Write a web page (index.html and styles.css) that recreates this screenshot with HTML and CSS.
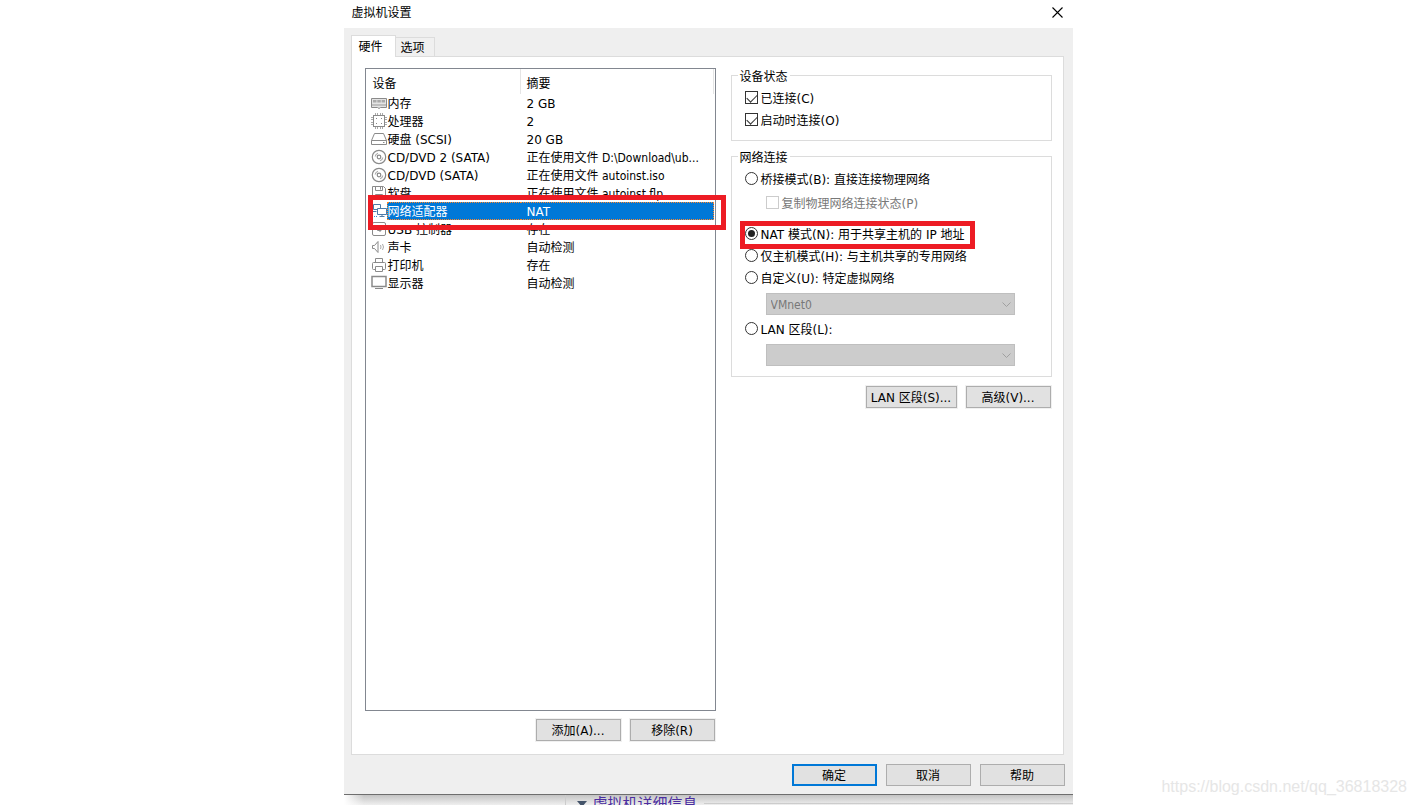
FILE: index.html
```html
<!DOCTYPE html>
<html lang="zh-CN">
<head>
    <meta charset="UTF-8">
    <meta name="viewport" content="width=device-width, initial-scale=1.0">
    <title>虚拟机设置</title>
    <link rel="stylesheet" href="styles.css">
</head>
<body>
    <div class="dialog">
        <header class="title-bar">
            <h1 class="title">虚拟机设置</h1>
            <button class="close" type="button" aria-label="关闭">
                <svg viewBox="0 0 11 11" fill="none" stroke="#000" stroke-width="1.1"><path d="M.5.5l10 10M10.5.5l-10 10"/></svg>
            </button>
        </header>

        <div class="tabs" role="tablist">
            <button class="tab active" type="button" role="tab" aria-selected="true">硬件</button>
            <button class="tab" type="button" role="tab" aria-selected="false">选项</button>
        </div>

        <main class="panel">
            <!-- 设备列表 -->
            <section class="devices">
                <div class="list-box">
                    <table class="list">
                        <colgroup>
                            <col class="col-icon">
                            <col class="col-name">
                            <col>
                        </colgroup>
                        <thead>
                            <tr>
                                <th colspan="2">设备</th>
                                <th>摘要</th>
                            </tr>
                        </thead>
                        <tbody>
                            <tr>
                                <td><svg class="icon" viewBox="0 0 16 16"><path d="M.5 3.500h15v9h-6l-1.500 1-1.500-1h-6z" fill="#e4e4e4" stroke="#8a8a8a"/><path d="M2 5h3.500v2.500H2zM6.300 5h3.500v2.500H6.300zM10.600 5H14v2.500h-3.400z" fill="#aaa"/><path d="M1 10h14" stroke="#999"/></svg></td>
                                <td>内存</td>
                                <td>2 GB</td>
                            </tr>
                            <tr>
                                <td><svg class="icon" viewBox="0 0 16 16" fill="none" stroke="#8a8a8a"><path d="M4.500 0v2M6.500 0v2M9.500 0v2M11.500 0v2M4.500 14v2M6.500 14v2M9.500 14v2M11.500 14v2M0 4.500h2M0 6.500h2M0 9.500h2M0 11.500h2M14 4.500h2M14 6.500h2M14 9.500h2M14 11.500h2" stroke="#aaa"/><rect x="2.500" y="2.500" width="11" height="11" fill="#fff"/><path d="M5 5.500h1M10 5.500h1M5 10.500h1M10 10.500h1"/></svg></td>
                                <td>处理器</td>
                                <td>2</td>
                            </tr>
                            <tr>
                                <td><svg class="icon" viewBox="0 0 16 16" fill="none" stroke="#8a8a8a"><path d="M3.500 2.500h9l3 7v4H.5v-4zM.5 9.500h15M12 11.500h1.500"/></svg></td>
                                <td>硬盘 (SCSI)</td>
                                <td>20 GB</td>
                            </tr>
                            <tr>
                                <td><svg class="icon" viewBox="0 0 16 16" fill="none" stroke="#8a8a8a" stroke-width="1.200"><circle cx="8" cy="8" r="6.700"/><circle cx="8" cy="8" r="1.800"/><path d="M4.200 7.500a4 4 0 0 1 2.800-3.300M11.800 8.500A4 4 0 0 1 9 11.800" stroke="#aaa"/></svg></td>
                                <td>CD/DVD 2 (SATA)</td>
                                <td class="file">正在使用文件 D:\Download\ub...</td>
                            </tr>
                            <tr>
                                <td><svg class="icon" viewBox="0 0 16 16" fill="none" stroke="#8a8a8a" stroke-width="1.200"><circle cx="8" cy="8" r="6.700"/><circle cx="8" cy="8" r="1.800"/><path d="M4.200 7.500a4 4 0 0 1 2.800-3.300M11.800 8.500A4 4 0 0 1 9 11.800" stroke="#aaa"/></svg></td>
                                <td>CD/DVD (SATA)</td>
                                <td class="file">正在使用文件 autoinst.iso</td>
                            </tr>
                            <tr>
                                <td><svg class="icon" viewBox="0 0 16 16" fill="none" stroke="#8a8a8a"><path d="M1.500 1.500h11l2 2v11h-13zM4.500 1.500v4h7v-4M9.500 2v2.500M4.500 14.500v-5h7v5"/></svg></td>
                                <td>软盘</td>
                                <td class="file">正在使用文件 autoinst.flp</td>
                            </tr>
                            <tr class="selected" aria-selected="true">
                                <td><svg class="icon" viewBox="0 0 16 16" fill="none" stroke="#4d7ba8"><path d="M2.500 1.500h7v5h-7zM1.500 8.500h4"/><path d="M6.500 5.500h9v6h-9z" fill="#fff"/><path d="M11 11.500v2M8.500 13.500h5"/><path d="M1 13.500h6" stroke="#2f8bd8" stroke-dasharray="1 1"/></svg></td>
                                <td>网络适配器</td>
                                <td>NAT</td>
                            </tr>
                            <tr>
                                <td><svg class="icon" viewBox="0 0 16 16" fill="none" stroke="#8a8a8a"><rect x="1.500" y="1.500" width="13" height="13" rx="1.500"/><path d="M6.500 4v5.500H10M8.500 8l1.500 1.500L8.500 11"/></svg></td>
                                <td>USB 控制器</td>
                                <td>存在</td>
                            </tr>
                            <tr>
                                <td><svg class="icon" viewBox="0 0 16 16" fill="none" stroke="#8a8a8a"><path d="M1.500 6.500h2l3.500-4v11l-3.500-4h-2z"/><path d="M9.500 6q1 2 0 4M11.500 5q2 3 0 6" stroke="#aaa"/></svg></td>
                                <td>声卡</td>
                                <td>自动检测</td>
                            </tr>
                            <tr>
                                <td><svg class="icon" viewBox="0 0 16 16" fill="none" stroke="#8a8a8a"><path d="M4.500 5.500v-4h7v4M4 12.500H2.500q-1 0-1-1v-5q0-1 1-1h11q1 0 1 1v5q0 1-1 1H12M4.500 9.500h7v5h-7z"/></svg></td>
                                <td>打印机</td>
                                <td>存在</td>
                            </tr>
                            <tr>
                                <td><svg class="icon" viewBox="0 0 16 16"><path d="M1 1.500h14v10H1z" fill="#fff" stroke="#8a8a8a" stroke-width="1.500"/><path d="M4 13.500h8" stroke="#8a8a8a"/></svg></td>
                                <td>显示器</td>
                                <td>自动检测</td>
                            </tr>
                        </tbody>
                    </table>
                </div>
                <div class="buttons">
                    <button class="btn" type="button">添加(A)...</button>
                    <button class="btn" type="button">移除(R)</button>
                </div>
            </section>

            <!-- 网络适配器设置 -->
            <form class="settings">
                <fieldset class="group status">
                    <legend>设备状态</legend>
                    <div class="row"><label><input type="checkbox" checked>已连接(C)</label></div>
                    <div class="row"><label><input type="checkbox" checked>启动时连接(O)</label></div>
                </fieldset>

                <fieldset class="group">
                    <legend>网络连接</legend>
                    <div class="row"><label><input type="radio" name="net">桥接模式(B): 直接连接物理网络</label></div>
                    <div class="row sub"><label><input type="checkbox" disabled>复制物理网络连接状态(P)</label></div>
                    <div class="row"><label class="marked"><input type="radio" name="net" checked>NAT 模式(N): 用于共享主机的 IP 地址</label></div>
                    <div class="row"><label><input type="radio" name="net">仅主机模式(H): 与主机共享的专用网络</label></div>
                    <div class="row"><label><input type="radio" name="net">自定义(U): 特定虚拟网络</label></div>
                    <div class="select">
                        <select aria-label="虚拟网络" disabled><option>VMnet0</option></select>
                        <svg viewBox="0 0 9 5" fill="none" stroke="#a0a0a0"><path d="M.5.5l4 4 4-4"/></svg>
                    </div>
                    <div class="row"><label><input type="radio" name="net">LAN 区段(L):</label></div>
                    <div class="select">
                        <select aria-label="LAN 区段" disabled><option></option></select>
                        <svg viewBox="0 0 9 5" fill="none" stroke="#a0a0a0"><path d="M.5.5l4 4 4-4"/></svg>
                    </div>
                </fieldset>

                <div class="buttons">
                    <button class="btn wide" type="button">LAN 区段(S)...</button>
                    <button class="btn" type="button">高级(V)...</button>
                </div>
            </form>
        </main>

        <footer class="footer">
            <button class="btn default" type="button">确定</button>
            <button class="btn" type="button">取消</button>
            <button class="btn" type="button">帮助</button>
        </footer>
    </div>

    <!-- 对话框后面的主窗口 -->
    <div class="behind">
        <div class="side"></div>
        <div class="details">
            <svg class="arrow" viewBox="0 0 10 6"><path d="M0 0h10L5 6z" fill="#44546a"/></svg>
            <span>虚拟机详细信息</span>
            <hr>
        </div>
    </div>

    <div class="watermark">https://blog.csdn.net/qq_36818328</div>
</body>
</html>
```
FILE: styles.css
```css
:root {
    --face: #efefef;
    --line: #dcdcdc;
    --button: #e1e1e1;
    --button-line: #adadad;
    --blue: #0078d7;
    --red: #ed1c24;
}

* {
    box-sizing: border-box;
    margin: 0;
    padding: 0;
}

body {
    display: flex;
    flex-direction: column;
    align-items: center;
    height: 100vh;
    overflow: hidden;
    background: #fff;
    color: #000;
    font: 12px/18px "DejaVu Sans", "Noto Sans CJK SC", sans-serif;
}

button,
select,
input {
    font: inherit;
    color: inherit;
}

.dialog {
    display: flex;
    flex: 1;
    flex-direction: column;
    width: 100%;
    max-width: 729px;
    min-height: 0;
    background: var(--face);
    border-bottom: 1px solid #6e6e6e;
}

.title-bar {
    display: flex;
    justify-content: space-between;
    align-items: center;
    height: 28px;
    padding: 0 10px 3px 8px;
    background: #fff;
}

.title {
    font-size: 12px;
    font-weight: normal;
}

.close {
    display: flex;
    border: none;
    background: none;
}

.close svg {
    width: 11px;
    height: 11px;
}

/* Tabs */
.tabs {
    display: flex;
    align-items: flex-end;
    height: 28px;
    padding-left: 7px;
}

.tab {
    height: 19px;
    padding: 1px 9px 0 5px;
    border: 1px solid var(--line);
    border-width: 1px 1px 0 0;
    background: #f0f0f0;
}

.tab.active {
    z-index: 1;
    height: 22px;
    margin-bottom: -1px;
    padding: 0 12px 0 7px;
    border-left-width: 1px;
    background: #fff;
}

.panel {
    display: grid;
    grid-template-columns: 1fr 321px;
    gap: 15px;
    flex: 1;
    min-height: 0;
    margin: 0 9px 0 7px;
    padding: 11px 11px 13px 13px;
    border: 1px solid var(--line);
    background: #fff;
}

/* Device list */
.devices {
    display: flex;
    flex-direction: column;
    gap: 8px;
}

.list-box {
    flex: 1;
    padding-right: 1px;
    border: 1px solid #828790;
}

.list {
    width: 100%;
    table-layout: fixed;
    border-spacing: 0;
}

.col-icon {
    width: 21px;
}

.col-name {
    width: 134px;
}

.list th {
    height: 25px;
    padding: 4px 0 0 7px;
    border-right: 1px solid #e5e5e5;
    font-weight: normal;
    text-align: left;
}

.list th:last-child {
    padding-left: 6px;
}

.list td {
    height: 18px;
    padding: 2px 0 0 1px;
    line-height: 16px;
    white-space: nowrap;
}

.list td:first-child {
    padding: 0 0 0 5px;
}

.list td:last-child {
    padding-left: 6px;
}

.icon {
    display: block;
    width: 16px;
    height: 16px;
}

.selected {
    position: relative;
    color: #fff;
}

.list .selected td + td {
    border: 1px dotted #ff8728;
    border-width: 1px 0;
    background: var(--blue);
    line-height: 14px;
}

.list .selected td:nth-child(2) {
    padding-left: 0;
    border-left-width: 1px;
}

.list .selected td:last-child {
    border-right-width: 1px;
}

.selected td:first-child::after {
    content: '';
    position: absolute;
    top: -7px;
    right: -12px;
    bottom: -10px;
    left: 2px;
    border: 5px solid var(--red);
}

/* Narrower face for paths */
.file,
.select select {
    font-family: "DejaVu Sans Condensed", "Noto Sans CJK SC", sans-serif;
}

/* Buttons */
.buttons {
    display: flex;
    justify-content: flex-end;
    gap: 9px;
    padding-right: 1px;
}

.btn {
    width: 85px;
    height: 22px;
    padding-top: 2px;
    border: 1px solid var(--button-line);
    background: var(--button);
    box-shadow: 0 0 0 1px #f0f0f0;
    line-height: 18px;
}

.btn.wide {
    width: 91px;
}

.btn.default {
    border: 2px solid var(--blue);
    line-height: 16px;
}

/* Settings */
.group {
    margin-bottom: 8px;
    padding: 4px 36px 7px 13px;
    border: 1px solid var(--line);
}

.group.status {
    padding-bottom: 9px;
}

.group legend {
    height: 15px;
    margin-left: -7px;
    padding: 0 2px;
    line-height: 18px;
}

.row {
    display: flex;
    height: 22px;
}

.row label {
    display: flex;
    align-items: center;
    gap: 3px;
    padding-top: 2px;
    white-space: nowrap;
}

.row.sub {
    margin: 2px 0 9px 21px;
    color: #787878;
}

.marked {
    position: relative;
}

.marked::after {
    content: '';
    position: absolute;
    top: -2px;
    right: -10px;
    bottom: -4px;
    left: -5px;
    border: 5px solid var(--red);
}

input {
    width: 13px;
    height: 13px;
    margin-bottom: 3px;
    appearance: none;
    border: 1px solid #333;
    background: #fff;
}

input[type="radio"] {
    display: grid;
    place-items: center;
    border-radius: 50%;
}

input[type="radio"]:checked::before {
    content: '';
    width: 7px;
    height: 7px;
    border-radius: 50%;
    background: #222;
}

input[type="checkbox"]:checked::before {
    content: '';
    display: block;
    width: 9px;
    height: 5px;
    margin: 2px 0 0 1px;
    border: solid #333;
    border-width: 0 0 1px 1px;
    transform: rotate(-45deg);
}

input:disabled {
    border-color: #ccc;
}

.select {
    display: grid;
    align-items: center;
    margin: 4px 0 3px 21px;
}

.select select,
.select svg {
    grid-area: 1 / 1;
}

.select select {
    width: 100%;
    height: 22px;
    padding: 1px 4px 0;
    appearance: none;
    border: 1px solid #bfbfbf;
    border-radius: 0;
    background: #ccc;
    color: #787878;
    opacity: 1;
}

.select svg {
    justify-self: end;
    width: 9px;
    height: 5px;
    margin-right: 4px;
    pointer-events: none;
}

.settings .buttons {
    margin-top: 9px;
}

.settings .group + .group {
    margin-bottom: 0;
}

.footer {
    display: flex;
    justify-content: flex-end;
    gap: 9px;
    padding: 9px 8px 8px;
}

.footer .btn {
    box-shadow: none;
}

/* Main window */
.behind {
    display: flex;
    width: 100%;
    max-width: 729px;
    height: 10px;
    overflow: hidden;
    background: linear-gradient(90deg, #fff, transparent 20px), linear-gradient(#c4c4c4, #efefef);
}

.side {
    width: 30%;
    min-width: 222px;
    border-right: 1px solid #ccc;
}

.details {
    display: flex;
    flex: 1;
    align-items: center;
    gap: 6px;
    height: 17px;
    padding-left: 11px;
    color: #4b2ea0;
    font-size: 15px;
}

.arrow {
    width: 10px;
    height: 6px;
}

.details hr {
    flex: 1;
    border: none;
    border-top: 1px solid #ccc;
}

.watermark {
    position: absolute;
    right: 9px;
    bottom: 9px;
    color: #e6e6e6;
    font: 16px/18px "Liberation Sans", sans-serif;
}
```
